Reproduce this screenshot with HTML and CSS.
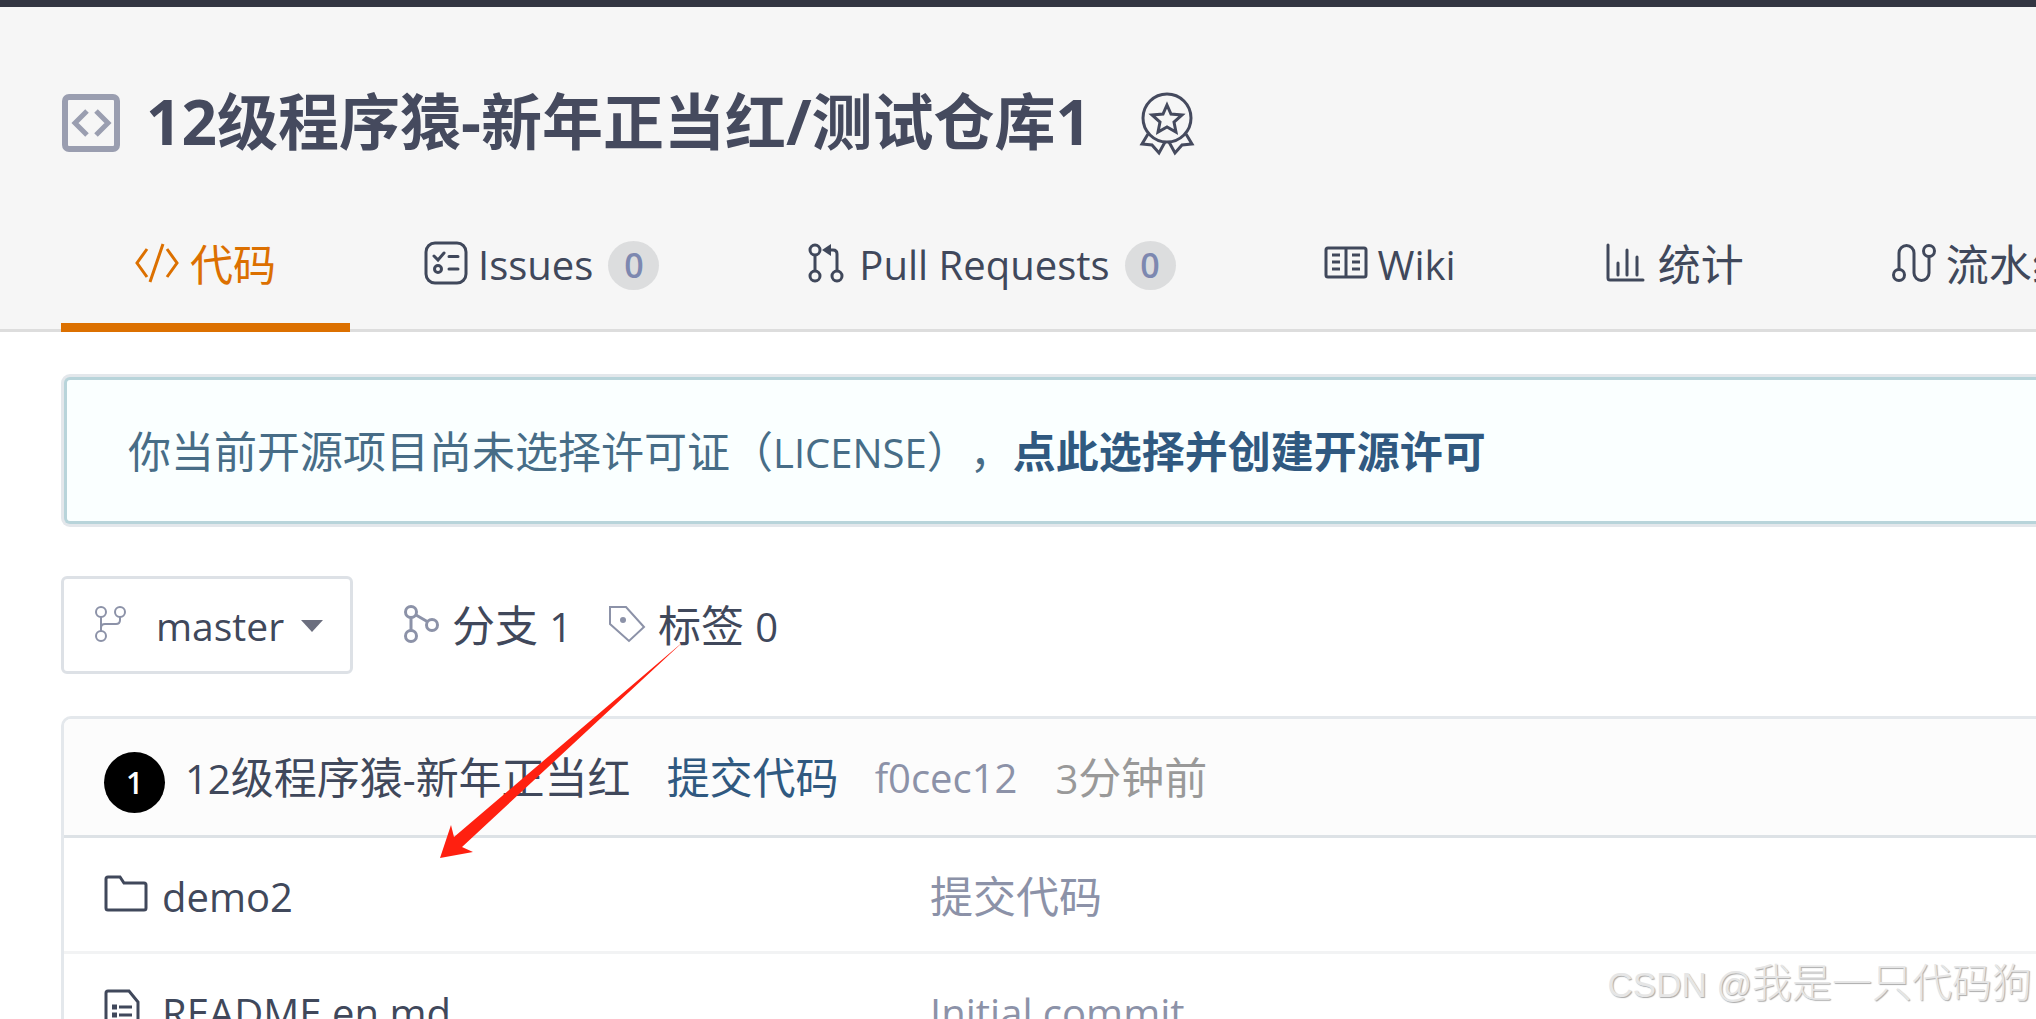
FILE: index.html
```html
<!DOCTYPE html>
<html lang="zh-CN">
<head>
<meta charset="utf-8">
<meta name="viewport" content="width=device-width, initial-scale=1">
<title>12级程序猿-新年正当红/测试仓库1</title>
<link rel="stylesheet" href="styles.css">
</head>
<body>
<div class="topbar"></div>
<header class="repo-header">
  <div class="repo-title">
    <svg class="repo-icon" width="58" height="58" viewBox="0 0 58 58" fill="none" stroke="currentColor" stroke-width="6"><rect x="3" y="3" width="52" height="52" rx="4"/><path d="M25 17 13 29l12 12M34 17l12 12-12 12" stroke-width="5"/></svg>
    <h1><span class="latin">12</span>级程序猿<span class="latin">-</span>新年正当红<span class="latin">/</span>测试仓库<span class="latin">1</span></h1>
    <svg class="medal" width="56" height="64" viewBox="0 0 56 64" fill="none" stroke="currentColor" stroke-width="3"><circle cx="28" cy="26" r="24"/><path d="M28 13l4 9 11 1-8 7 2 10-9-5-9 5 2-10-8-7 11-1z"/><path d="M9 42 3 52l10 1 7 8 6-11M47 42l6 10-10 1-7 8-6-11"/></svg>
  </div>
  <nav class="tabs">
    <a class="tab active" href="#code"><svg width="45" height="40" viewBox="0 0 45 40" fill="none" stroke="currentColor" stroke-width="3"><path d="M12 6 2 20l10 14M32 6l10 14-10 14M28 1 15 39"/></svg><span>代码</span></a>
    <a class="tab" href="#issues"><svg width="44" height="44" viewBox="0 0 44 44" fill="none" stroke="currentColor" stroke-width="3"><rect x="2" y="2" width="40" height="40" rx="9"/><g stroke-linecap="round"><path d="M10 15l4 4 6-7M25 15.500h9M25 28h9"/></g><circle cx="14" cy="28" r="3.500"/></svg><span class="latin">Issues</span><span class="badge">0</span></a>
    <a class="tab" href="#pulls"><svg width="42" height="40" viewBox="0 0 42 40" fill="none" stroke="currentColor" stroke-width="3"><circle cx="8" cy="7" r="5"/><circle cx="8" cy="33" r="5"/><circle cx="30" cy="33" r="5"/><path d="M8 12v16M30 28V11q0-4-4-4h-4"/><path d="M24 1v12l-9-6z" fill="currentColor" stroke="none"/></svg><span class="latin">Pull Requests</span><span class="badge">0</span></a>
    <a class="tab" href="#wiki"><svg width="44" height="40" viewBox="0 0 44 40" fill="none" stroke="currentColor" stroke-width="3"><rect x="2" y="5" width="40" height="29" rx="2"/><path d="M22 5v29M8 12h8M8 19h8M8 26h8M28 12h8M28 19h8M28 26h8"/></svg><span class="latin">Wiki</span></a>
    <a class="tab" href="#stats"><svg width="44" height="40" viewBox="-2 0 44 40" fill="none" stroke="currentColor" stroke-width="3" stroke-linecap="round"><path d="M2 2v33q0 2 2 2h33M12 20v12M21 7v25M31 14v18"/></svg><span>统计</span></a>
    <a class="tab" href="#pipeline"><svg width="44" height="40" viewBox="0 0 44 40" fill="none" stroke="currentColor" stroke-width="3"><circle cx="7" cy="32" r="5.500"/><circle cx="37" cy="8" r="5.500"/><path d="M7 26V10a7.500 7.500 0 0 1 15 0v20a7.500 7.500 0 0 0 15 0V14"/></svg><span>流水线</span></a>
  </nav>
</header>
<main class="content">
  <div class="notice">你当前开源项目尚未选择许可证（<span class="latin">LICENSE</span>），<a href="#license">点此选择并创建开源许可</a></div>
  <div class="toolbar">
    <button class="branch" type="button"><svg width="32" height="36" viewBox="0 0 32 36" fill="none" stroke="currentColor" stroke-width="2"><circle cx="6" cy="6" r="5"/><circle cx="25" cy="6" r="5"/><circle cx="6" cy="30" r="5"/><path d="M6 11v14M25 11v3q0 4-4 4H10q-4 0-4 4"/></svg><span>master</span><i class="caret"></i></button>
    <a class="ref branches" href="#branches"><svg width="36" height="40" viewBox="0 0 36 40" fill="none" stroke="currentColor" stroke-width="3"><circle cx="7" cy="8" r="5.500"/><circle cx="7" cy="32" r="5.500"/><circle cx="28" cy="21" r="5.500"/><path d="M7 13v14M12 11l12 7"/></svg><span>分支 <span class="latin">1</span></span></a>
    <a class="ref" href="#tags"><svg width="38" height="40" viewBox="0 0 38 40" fill="none" stroke="currentColor" stroke-width="2"><path d="M2 3h16l18 20-15 14L2 20z"/><circle cx="15" cy="16" r="3" fill="currentColor" stroke="none"/></svg><span>标签 <span class="latin">0</span></span></a>
  </div>
  <section class="files">
    <div class="commit">
      <span class="avatar">1</span>
      <a class="author" href="#author"><span class="latin">12</span>级程序猿<span class="latin">-</span>新年正当红</a>
      <a class="message" href="#commit">提交代码</a>
      <a class="sha latin" href="#sha">f0cec12</a>
      <span class="time"><span class="latin">3</span>分钟前</span>
    </div>
    <table class="tree">
      <tbody>
      <tr><td class="name"><a class="file latin" href="#demo2"><svg width="44" height="40" viewBox="0 0 44 40" fill="none" stroke="currentColor" stroke-width="3"><path d="M2 4q0-2 2-2h12l4 6h20q2 0 2 2v23q0 2-2 2H4q-2 0-2-2z"/></svg><span>demo2</span></a></td><td class="desc">提交代码</td></tr>
      <tr><td class="name"><a class="file latin" href="#readme"><svg width="44" height="44" viewBox="0 0 44 44" fill="none" stroke="currentColor" stroke-width="3"><path d="M2 4q0-2 2-2h21l9 11v27q0 2-2 2H4q-2 0-2-2z"/><path d="M15 18h13M15 26h13M15 34h13"/><path d="M8 18h5M8 26h5M8 34h5" stroke-width="5"/></svg><span>README.en.md</span></a></td><td class="desc latin">Initial commit</td></tr>
      </tbody>
    </table>
  </section>
</main>
<svg class="arrow" width="246" height="218" viewBox="0 0 246 218" fill="#ff2010"><path d="M0 217 11 184l3 12L244 0 22 206l11 5z"/></svg>
<div class="watermark"><span>CSDN @</span>我是一只代码狗</div>
</body>
</html>
```
FILE: styles.css
```css
* { box-sizing: border-box; }
body {
  margin: 0;
  height: 100vh;
  overflow: hidden;
  position: relative;
  background: #fff;
  color: #40485b;
  font: 43px/60px "Open Sans", "Noto Sans CJK SC", sans-serif;
  text-spacing-trim: space-all;
}
a { color: inherit; text-decoration: none; }
svg { flex: none; display: block; }
.latin { font-size: 40px; }

.topbar { height: 7px; background: #333642; }
.repo-header { background: #f6f6f6; border-bottom: 3px solid #ddd; }
.repo-title { display: flex; align-items: center; height: 232px; padding: 0 62px; color: #454a5e; }
.repo-icon { color: #9a9eb0; }
h1 { margin: 0 48px 4px 26px; font-size: 61px; line-height: 80px; font-weight: 700; white-space: nowrap; }
h1 .latin { font-size: 62px; }
.medal { margin-top: 2px; }

.tabs { display: flex; margin: 0 0 -3px 61px; }
.tab { display: flex; align-items: center; flex: none; gap: 10px; height: 93px; padding: 0 74px 32px; white-space: nowrap; border-bottom: 9px solid transparent; }
.tab svg { margin-bottom: 5px; }
.tab.active { color: #dc7000; border-color: #dc7000; }
.badge { width: 51px; height: 49px; margin-left: 5px; border-radius: 50%; background: #dcddde; color: #7d88b0; font-size: 34px; line-height: 49px; font-weight: 600; text-align: center; }

.content { padding: 45px 0 0 61px; }
.notice { margin-left: 3px; padding: 42px 61px 38px; border: 3px solid #b8d4da; border-right: 0; border-radius: 6px 0 0 6px; box-shadow: 0 0 0 3px #e3e7eb; background: #faffff; color: #476d87; white-space: nowrap; }
.notice a { color: #305980; font-weight: 700; }

.toolbar { display: flex; align-items: center; margin-top: 52px; }
.branch { display: flex; align-items: center; width: 292px; height: 98px; padding: 2px 27px 0 31px; border: 3px solid #dde1e6; border-radius: 6px; background: #fff; color: #40485b; font: inherit; font-size: 39px; }
.branch svg { margin: 0 29px 4px 0; color: #8c92a8; }
.caret { margin-left: auto; border: 11px solid transparent; border-top: 12px solid #6b6e7e; border-bottom: 0; }
.ref { display: flex; align-items: center; gap: 12px; padding-top: 2px; white-space: nowrap; }
.ref svg { margin-bottom: 4px; color: #8c92a8; }
.branches { margin: 0 36px 0 51px; }

.files { margin-top: 42px; border: 3px solid #e4e8ec; border-right: 0; border-radius: 10px 0 0 0; overflow: hidden; }
.commit { display: flex; align-items: center; height: 119px; padding: 2px 40px 0; border-bottom: 3px solid #dde2e6; background: #fcfcfc; white-space: nowrap; }
.avatar { width: 61px; height: 61px; margin: 8px 20px 0 0; border-radius: 50%; background: #000; color: #fff; font-size: 30px; line-height: 61px; font-weight: 600; text-align: center; }
.message { margin: 0 36px; color: #305980; }
.sha { color: #8c92a8; }
.time { margin-left: 38px; color: #999; }
.tree { width: 100%; border-spacing: 0; table-layout: fixed; }
.tree td { height: 116px; padding: 5px 0 0; border-bottom: 3px solid #f2f3f4; }
.name { width: 866px; }
.file { display: flex; align-items: center; gap: 14px; padding-left: 40px; }
.file svg { margin-bottom: 5px; }
.desc { color: #8c92a8; }

.arrow { position: absolute; left: 440px; top: 641px; }
.watermark { position: absolute; right: 4px; bottom: 4px; color: #e6e6e6; font: 300 40px/60px "Liberation Sans", "Noto Sans CJK SC", sans-serif; text-shadow: 1px 1px 1px #aaa; white-space: nowrap; }
.watermark span { font-size: 35px; }
```
